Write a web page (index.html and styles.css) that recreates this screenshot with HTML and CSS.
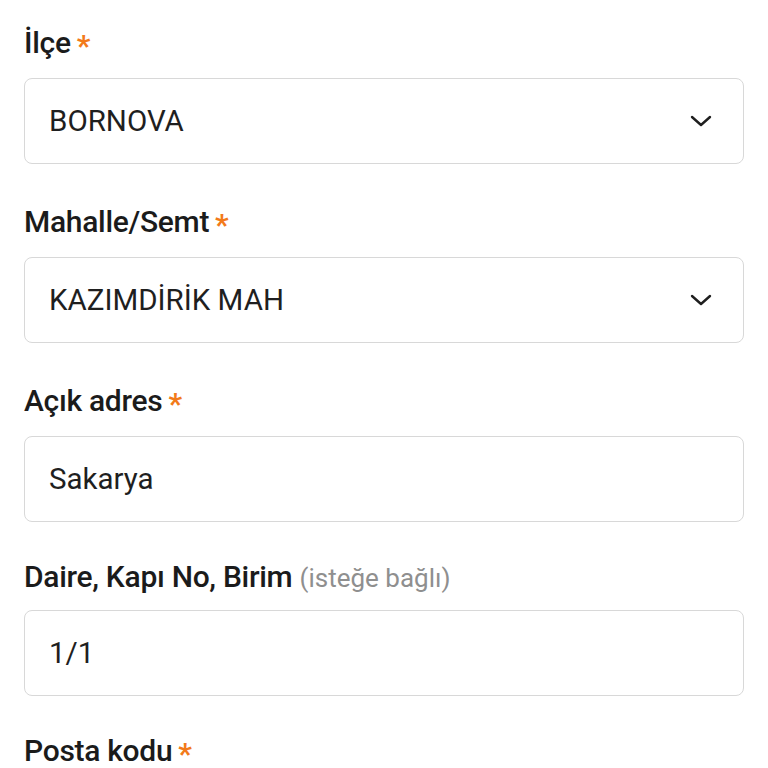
FILE: index.html
```html
<!DOCTYPE html>
<html lang="tr">
<head>
<meta charset="utf-8">
<link rel="stylesheet" href="styles.css">
</head>
<body>
<form class="form">
  <div class="field">
    <div class="label">İlçe<span class="req">*</span></div>
    <div class="box select">
      <span class="value">BORNOVA</span>
      <svg class="chev" viewBox="0 0 22 12" width="22" height="12"><path d="M2 2 L11 10 L20 2" fill="none" stroke="#1f1f1f" stroke-width="2.4" stroke-linecap="round" stroke-linejoin="round"/></svg>
    </div>
  </div>
  <div class="field">
    <div class="label">Mahalle/Semt<span class="req">*</span></div>
    <div class="box select">
      <span class="value">KAZIMDİRİK MAH</span>
      <svg class="chev" viewBox="0 0 22 12" width="22" height="12"><path d="M2 2 L11 10 L20 2" fill="none" stroke="#1f1f1f" stroke-width="2.4" stroke-linecap="round" stroke-linejoin="round"/></svg>
    </div>
  </div>
  <div class="field field-before-opt">
    <div class="label">Açık adres<span class="req">*</span></div>
    <div class="box">
      <span class="value">Sakarya</span>
    </div>
  </div>
  <div class="field field-opt">
    <div class="label">Daire, Kapı No, Birim <span class="opt">(isteğe bağlı)</span></div>
    <div class="box">
      <span class="value">1/1</span>
    </div>
  </div>
  <div class="field">
    <div class="label">Posta kodu<span class="req">*</span></div>
  </div>
</form>
</body>
</html>
```

FILE: styles.css
```css
html, body {
  margin: 0;
  padding: 0;
  background: #ffffff;
  height: 768px;
  overflow: hidden;
}
body {
  font-family: Roboto, "Noto Sans", "Liberation Sans", sans-serif;
  color: #1b1b1b;
}
.form {
  padding: 25px 24px 0 24px;
  display: flex;
  flex-direction: column;
}
.field {
  display: flex;
  flex-direction: column;
  margin-bottom: 40px;
}
.field-before-opt {
  margin-bottom: 37px;
}
.field-opt {
  margin-bottom: 37px;
}
.label {
  font-size: 30px;
  font-weight: 500;
  line-height: 36px;
  height: 36px;
  margin-bottom: 17px;
  letter-spacing: -0.3px;
  white-space: nowrap;
}
.field-opt .label {
  margin-bottom: 15px;
}
.req {
  color: #f27a1a;
  font-size: 30px;
  font-weight: 700;
  line-height: 0;
  margin-left: 6px;
  vertical-align: -3px;
}
.opt {
  color: #8f8f8f;
  font-weight: 400;
  font-size: 26px;
  letter-spacing: 0;
}
.box {
  height: 86px;
  box-sizing: border-box;
  border: 1.5px solid #d8d8d8;
  border-radius: 8px;
  display: flex;
  align-items: center;
  justify-content: space-between;
  padding: 0 31px 0 24px;
}
.value {
  font-size: 29.5px;
  color: #1f1f1f;
}
.chev {
  display: block;
}
```
